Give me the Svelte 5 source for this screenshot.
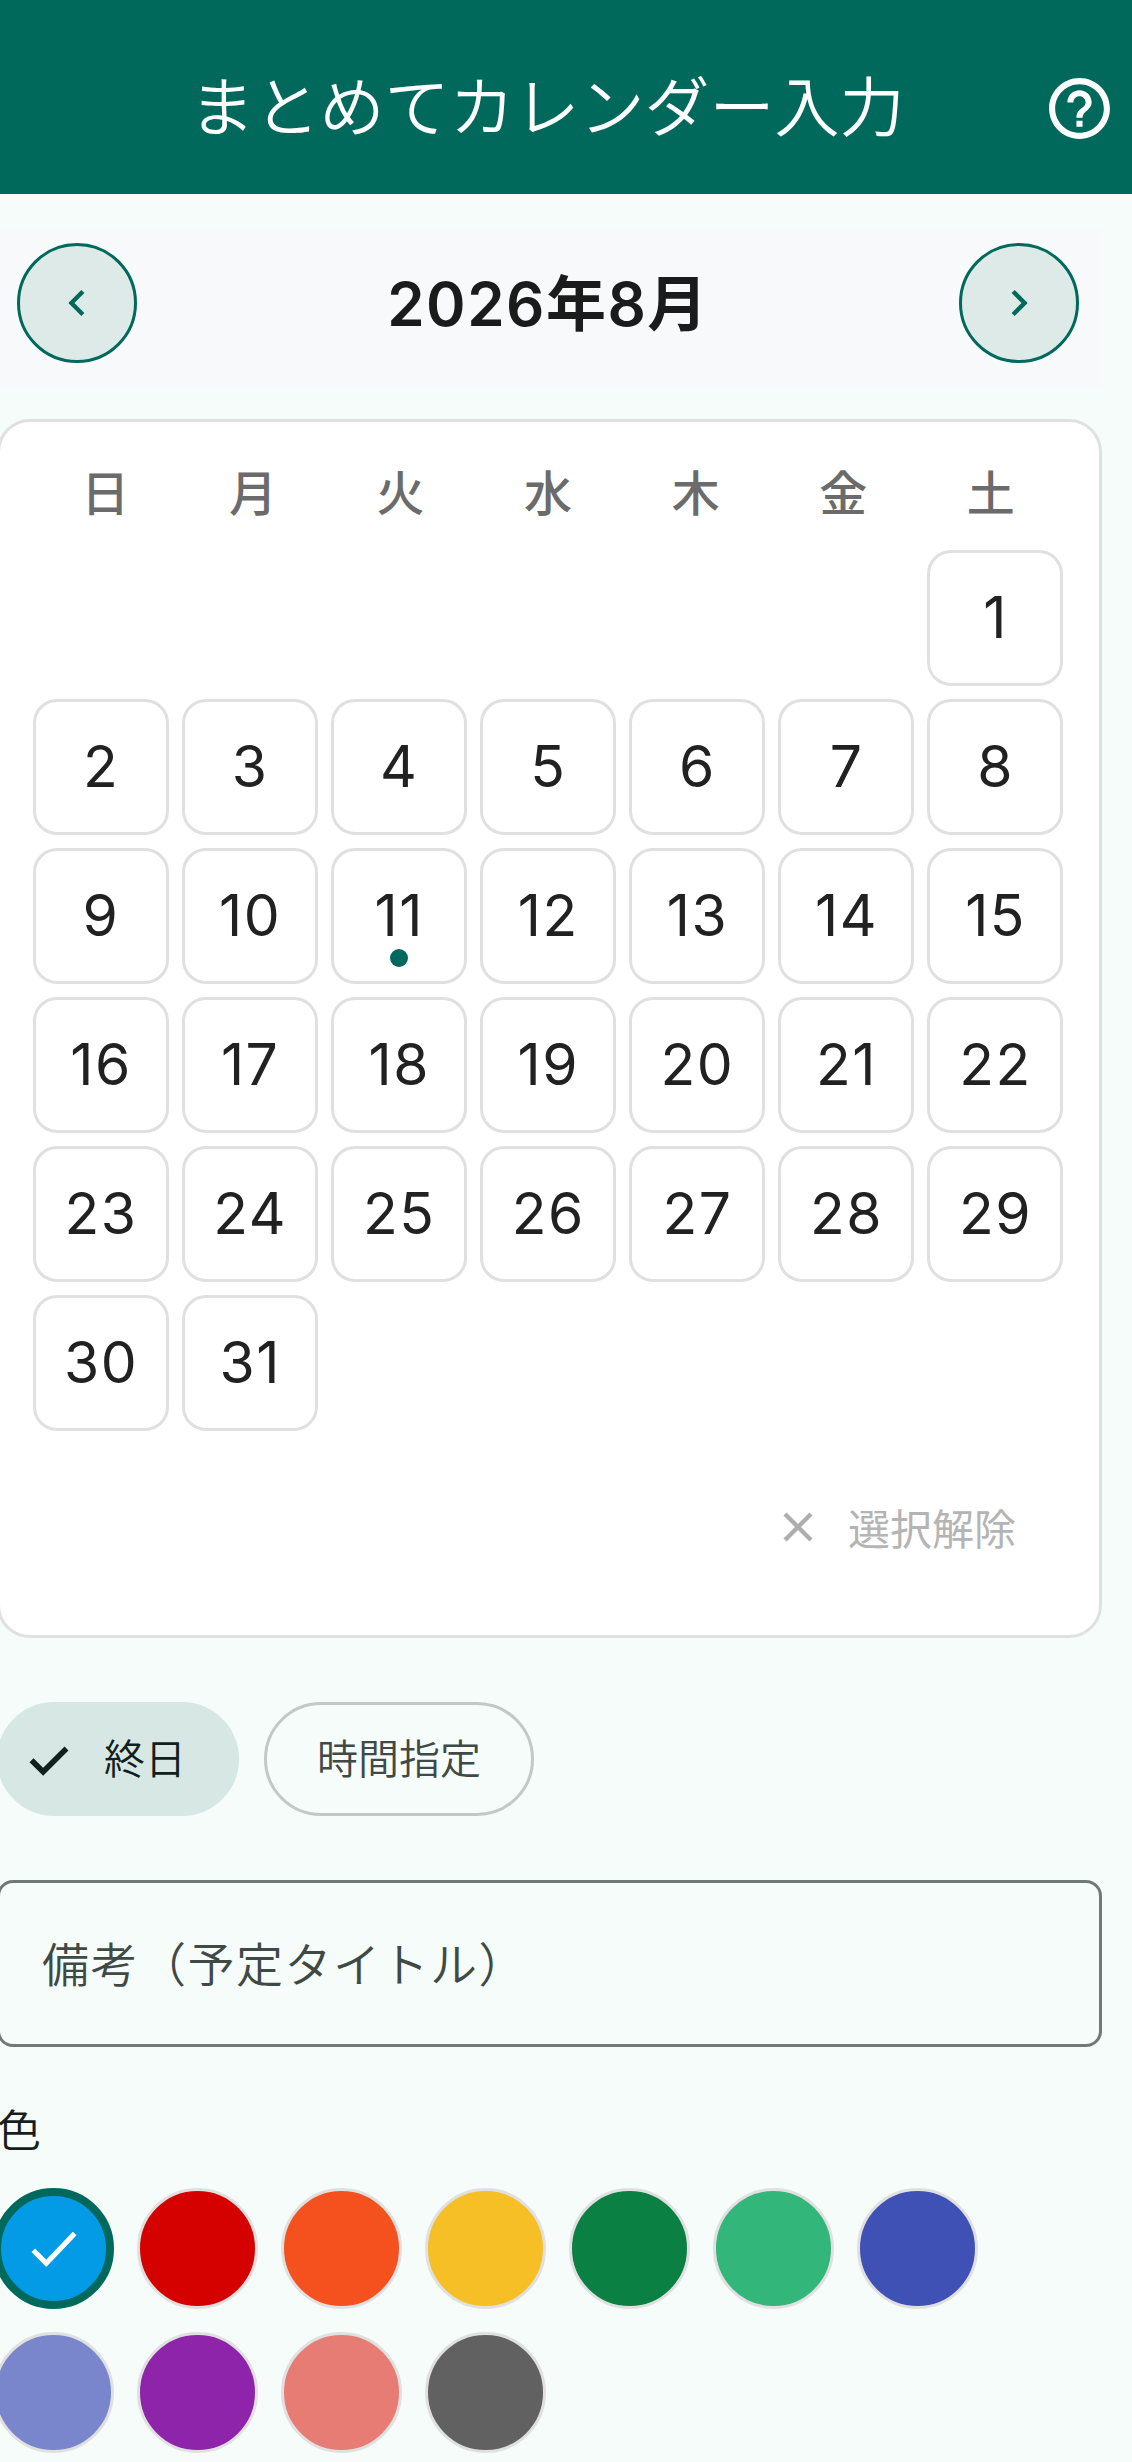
<script lang="ts">
	const weekdays = ['日', '月', '火', '水', '木', '金', '土'];

	// August 2026 starts on a Saturday
	const leadingBlanks = 6;
	const days = Array.from({ length: 31 }, (_, i) => i + 1);
	const markedDay = 11;

	const colors = [
		'#039be5', '#d50000', '#f4511e', '#f6bf26', '#0b8043', '#33b679',
		'#3f51b5', '#7986cb', '#8e24aa', '#e67c73', '#616161'
	];
	let selectedColor = $state('#039be5');
</script>

<div class="screen">
	<header class="app-bar">
		<h1>まとめてカレンダー入力</h1>
		<button class="help" aria-label="ヘルプ">
			<svg width="73" height="73" viewBox="0 0 24 24" fill="#fff">
				<path d="M11 18h2v-2h-2v2zm1-16C6.48 2 2 6.48 2 12s4.48 10 10 10 10-4.48 10-10S17.52 2 12 2zm0 18c-4.41 0-8-3.59-8-8s3.59-8 8-8 8 3.59 8 8-3.59 8-8 8zm0-14c-2.21 0-4 1.79-4 4h2c0-1.1.9-2 2-2s2 .9 2 2c0 2-3 1.75-3 5h2c0-2.25 3-2.5 3-5 0-2.21-1.79-4-4-4z" />
			</svg>
		</button>
	</header>

	<main class="content">
		<div class="month-nav">
			<button class="nav-btn" aria-label="前の月">
				<svg width="52" height="52" viewBox="0 0 24 24" fill="#00695c">
					<path d="M15.41 7.41 14 6l-6 6 6 6 1.41-1.41L10.83 12z" />
				</svg>
			</button>
			<span class="month-title">2026年8月</span>
			<button class="nav-btn" aria-label="次の月">
				<svg width="52" height="52" viewBox="0 0 24 24" fill="#00695c">
					<path d="M8.59 16.59 10 18l6-6-6-6-1.41 1.41L13.17 12z" />
				</svg>
			</button>
		</div>

		<section class="calendar">
			<div class="weekdays">
				{#each weekdays as day}
					<span>{day}</span>
				{/each}
			</div>
			<div class="days">
				{#each Array(leadingBlanks) as _}
					<span></span>
				{/each}
				{#each days as day}
					<button class="day">
						{day}
						{#if day === markedDay}
							<i class="dot"></i>
						{/if}
					</button>
				{/each}
			</div>
			<button class="clear">
				<svg width="52" height="52" viewBox="0 0 24 24" fill="none" stroke="#aeaeae" stroke-width="2">
					<line x1="6" y1="6" x2="18" y2="18" />
					<line x1="18" y1="6" x2="6" y2="18" />
				</svg>
				<span>選択解除</span>
			</button>
		</section>

		<div class="chips">
			<button class="chip active">
				<svg width="56" height="56" viewBox="0 0 24 24" fill="none" stroke="#10201c" stroke-width="2.4">
					<polyline points="4.5,12.5 9.5,17.5 19.5,7.5" />
				</svg>
				<span>終日</span>
			</button>
			<button class="chip"><span>時間指定</span></button>
		</div>

		<div class="field">備考（予定タイトル）</div>

		<div class="color-label">色</div>
		<div class="swatches">
			{#each colors as color}
				<button
					class="swatch"
					class:selected={color === selectedColor}
					style="background: {color}"
					aria-label={color}
					onclick={() => (selectedColor = color)}
				>
					{#if color === selectedColor}
						<svg width="62" height="62" viewBox="0 0 24 24" fill="none" stroke="#fff" stroke-width="2">
							<polyline points="4,12.5 9,17.5 20,6" />
						</svg>
					{/if}
				</button>
			{/each}
		</div>
	</main>
</div>

<style>
	:global(body) {
		margin: 0;
		background: #f5fcf9;
		overflow: hidden;
	}

	button {
		font: inherit;
		color: inherit;
		padding: 0;
		background: none;
		border: none;
	}

	.screen {
		width: 1132px;
		height: 2462px;
		overflow: hidden;
		font-family: Inter, "Noto Sans CJK JP", sans-serif;
		color: #1a1c1b;
	}

	.app-bar {
		position: relative;
		height: 194px;
		background: #00695c;
		display: flex;
		align-items: center;
		justify-content: center;
	}

	.app-bar h1 {
		margin: 12px 0 0 -38px;
		font-size: 65px;
		font-weight: 350;
		color: #fff;
		font-family: "Noto Sans CJK JP", sans-serif;
	}

	.help {
		position: absolute;
		right: 16px;
		top: 72px;
		width: 73px;
		height: 73px;
	}

	.content {
		display: flex;
		flex-direction: column;
		margin-left: -3px;
		width: 1105px;
	}

	.month-nav {
		display: flex;
		align-items: center;
		justify-content: space-between;
		margin-top: 34px;
		padding: 15px 23px 24px 20px;
		margin-bottom: 32px;
		background: #f8f9fb;
	}

	.nav-btn {
		width: 120px;
		height: 120px;
		border-radius: 50%;
		border: 3px solid #00695c;
		background: #deeae8;
		display: flex;
		align-items: center;
		justify-content: center;
	}

	.month-title {
		font-size: 60px;
		font-weight: 600;
		letter-spacing: 1.5px;
		color: #191c1b;
		margin-bottom: 7px;
	}

	.calendar {
		box-sizing: border-box;
		height: 1219px;
		background: #fff;
		border: 3px solid #e0e0e0;
		border-radius: 33px;
		padding: 0 33px 0 32.5px;
		display: flex;
		flex-direction: column;
	}

	.weekdays {
		display: grid;
		grid-template-columns: repeat(7, 147.6px);
		margin-left: -1px;
		height: 128px;
		align-items: center;
		padding-top: 8px;
		box-sizing: border-box;
		justify-items: center;
		font-size: 48px;
		font-weight: 500;
		color: #6b6b6b;
	}

	.days {
		display: grid;
		grid-template-columns: repeat(7, 136.1px);
		grid-auto-rows: 136px;
		gap: 13px;
	}

	.day {
		position: relative;
		box-sizing: border-box;
		background: #fff;
		border: 3px solid #e0e0e0;
		border-radius: 24px;
		font-size: 57px;
		letter-spacing: 1.5px;
		padding: 0 0 2px 1px;
		color: #212121;
	}

	.dot {
		position: absolute;
		left: 50%;
		bottom: 14px;
		width: 18px;
		height: 18px;
		margin-left: -9px;
		border-radius: 50%;
		background: #00695c;
	}

	.clear {
		display: flex;
		align-items: center;
		align-self: flex-end;
		gap: 24px;
		margin: 65px 50px 0 0;
		font-size: 42px;
		color: #b4b4b4;
	}

	.chips {
		display: flex;
		gap: 25px;
		margin-top: 64px;
	}

	.chip {
		box-sizing: border-box;
		height: 114px;
		display: flex;
		align-items: center;
		padding: 0 50px;
		border: 3px solid #c0c9c5;
		border-radius: 57px;
		font-size: 41px;
		font-family: "Noto Sans CJK JP", sans-serif;
		font-weight: 350;
		color: #3f4945;
	}

	.chip span {
		margin-bottom: 6px;
	}

	.chip.active {
		background: #d7e8e4;
		border-color: #d7e8e4;
		color: #10201c;
		padding: 0 50px 0 21px;
		gap: 27px;
	}

	.field {
		box-sizing: border-box;
		height: 167px;
		margin-top: 64px;
		display: flex;
		align-items: center;
		padding: 0 0 5px 42px;
		border: 3px solid #6f7975;
		border-radius: 16px;
		font-size: 47px;
		font-weight: 350;
		letter-spacing: 1.5px;
		color: #3f4945;
		font-family: "Noto Sans CJK JP", sans-serif;
	}

	.color-label {
		margin-top: 51px;
		font-size: 44px;
		line-height: 60px;
		font-weight: 350;
		font-family: "Noto Sans CJK JP", sans-serif;
	}

	.swatches {
		display: flex;
		flex-wrap: wrap;
		gap: 23px;
		margin: 30px 0 0 -4px;
	}

	.swatch {
		box-sizing: border-box;
		width: 121px;
		height: 121px;
		border-radius: 50%;
		border: 3px solid #e0e0e0;
		display: flex;
		align-items: center;
		justify-content: center;
	}

	.swatch.selected {
		border: 8px solid #00695c;
	}
</style>
